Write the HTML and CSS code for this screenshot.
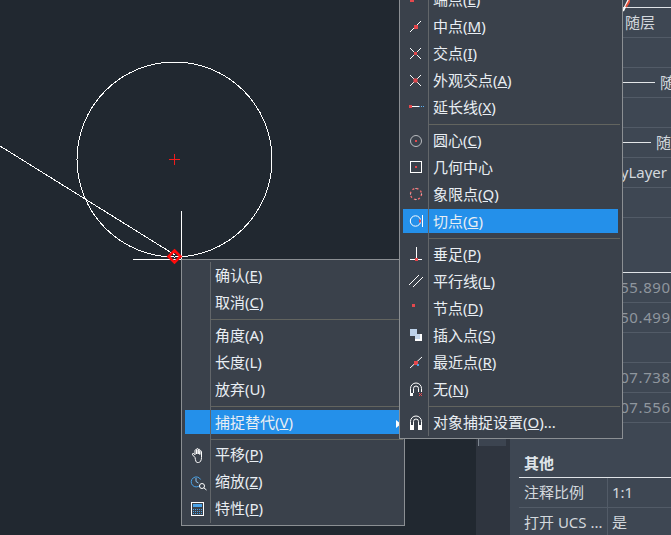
FILE: index.html
```html
<!DOCTYPE html>
<html lang="zh-CN">

<head>
  <meta charset="UTF-8">
  <title>捕捉替代</title>
  <link rel="stylesheet" href="styles.css">
</head>

<body>
  <div class="app">
    <div class="canvas">
      <svg class="drawing" width="476" height="535" viewBox="0 0 476 535">
        <circle cx="174.5" cy="159.5" r="97.5" class="wire" />
        <path d="M0 146 L175 255" class="wire" />
        <path d="M181.5 211 V259 M133 259.5 H182" class="wire" />
        <path d="M169 159.5 H180 M174.5 154 V165" class="mark" />
        <path d="M174.5 250.5 L180.5 256.5 L174.5 262.5 L168.5 256.5 Z" class="snap" />
      </svg>
    </div>

    <div class="track">
      <div class="thumb"></div>
    </div>

    <div class="panel">
      <svg class="swatch" width="8" height="12" viewBox="0 0 8 12">
        <path d="M6.5 0 L1 11" stroke="#fff" stroke-width="2" />
        <path d="M8 0 L4 7" stroke="#e5533d" stroke-width="2" />
      </svg>
      <div class="head head-top"></div>
      <div class="row"><span class="key"></span><span class="val val-color">随层</span></div>
      <div class="row"><span class="key"></span><span class="val"></span></div>
      <div class="row"><span class="key"></span><span class="val"><i class="ln ln-a"></i>随层</span></div>
      <div class="row"><span class="key"></span><span class="val"></span></div>
      <div class="row"><span class="key"></span><span class="val"><i class="ln ln-b"></i>随层</span></div>
      <div class="row"><span class="key"></span><span class="val">ByLayer</span></div>
      <div class="row"><span class="key"></span><span class="val"></span></div>

      <div class="head head-geo"></div>
      <div class="row"><span class="key"></span><span class="val dim">355.8901</span></div>
      <div class="row"><span class="key"></span><span class="val dim">350.4994</span></div>
      <div class="row"><span class="key"></span><span class="val dim"></span></div>
      <div class="row"><span class="key"></span><span class="val dim">107.7385</span></div>
      <div class="row"><span class="key"></span><span class="val dim">107.5562</span></div>

      <div class="head head-other">其他</div>
      <div class="row line"><span class="key">注释比例</span><span class="val">1:1</span></div>
      <div class="row line"><span class="key">打开 UCS ...</span><span class="val">是</span></div>
    </div>

    <!-- right click menu -->
    <div class="menu menu-main">
      <div class="item"><span class="ico"></span><span class="txt">确认(<u>E</u>)</span></div>
      <div class="item"><span class="ico"></span><span class="txt">取消(<u>C</u>)</span></div>
      <div class="sep"></div>
      <div class="item"><span class="ico"></span><span class="txt">角度(A)</span></div>
      <div class="item"><span class="ico"></span><span class="txt">长度(L)</span></div>
      <div class="item"><span class="ico"></span><span class="txt">放弃(U)</span></div>
      <div class="sep"></div>
      <div class="item active has-sub"><span class="ico"></span><span class="txt">捕捉替代(<u>V</u>)</span></div>
      <div class="sep sep-short"></div>
      <div class="item">
        <span class="ico">
          <svg width="21" height="21" viewBox="0 0 21 21" class="thin">
            <path d="M8 12.5 L5.7 10 C4.8 8.8 6 7.8 7 8.8 L8 9.8 V5.5 C8 4.4 9.6 4.4 9.6 5.5 V9 V4.3 C9.6 3.2 11.2 3.2 11.2 4.3 V9 V5 C11.2 3.9 12.8 3.9 12.8 5 V9.5 V6.5 C12.8 5.5 14.5 5.5 14.5 6.5 V12.5 C14.5 15.5 13.2 17.5 11.5 17.5 H10.2 C9 17.5 8.6 15.5 8 12.5 Z" />
          </svg>
        </span>
        <span class="txt">平移(<u>P</u>)</span>
      </div>
      <div class="item">
        <span class="ico">
          <svg width="21" height="21" viewBox="0 0 21 21" class="thin">
            <path d="M13 13.2 A5 5 0 1 1 13.6 7.5" stroke="#4aa3e8" />
            <path d="M9 6 V9.5 L11.5 11" stroke="#8fc4ee" />
            <circle cx="15" cy="14" r="2.5" />
            <path d="M16.8 15.8 L19.5 18" />
          </svg>
        </span>
        <span class="txt">缩放(<u>Z</u>)</span>
      </div>
      <div class="item">
        <span class="ico">
          <svg width="21" height="21" viewBox="0 0 21 21" class="thin">
            <rect x="4.5" y="3.5" width="12" height="13" />
            <rect x="6" y="5" width="9" height="3" fill="#4aa3e8" stroke="none" />
            <path d="M6 10.5 H15 M6 12.5 H15 M6 14.5 H15" stroke="#4aa3e8" stroke-dasharray="1 1" />
          </svg>
        </span>
        <span class="txt">特性(<u>P</u>)</span>
      </div>
    </div>

    <!-- snap override submenu -->
    <div class="menu menu-sub">
      <div class="item">
        <span class="ico">
          <svg width="21" height="21" viewBox="0 0 21 21" class="thin">
            <path d="M7 9 L15 1" />
            <rect x="5" y="8" width="4" height="4" class="red" />
          </svg>
        </span>
        <span class="txt">端点(<u>E</u>)</span>
      </div>
      <div class="item">
        <span class="ico">
          <svg width="21" height="21" viewBox="0 0 21 21" class="thin">
            <path d="M5 15 L16 4" />
            <rect x="9" y="8" width="4" height="4" class="red" />
          </svg>
        </span>
        <span class="txt">中点(<u>M</u>)</span>
      </div>
      <div class="item">
        <span class="ico">
          <svg width="21" height="21" viewBox="0 0 21 21" class="thin">
            <path d="M5 4 L16 15 M16 4 L5 15" />
            <rect x="9" y="8" width="3" height="3" class="red" />
          </svg>
        </span>
        <span class="txt">交点(<u>I</u>)</span>
      </div>
      <div class="item">
        <span class="ico">
          <svg width="21" height="21" viewBox="0 0 21 21" class="thin">
            <path d="M5 4 L16 15 M16 4 L5 15" />
            <rect x="8.5" y="7.5" width="4" height="4" class="red" />
          </svg>
        </span>
        <span class="txt">外观交点(<u>A</u>)</span>
      </div>
      <div class="item">
        <span class="ico">
          <svg width="21" height="21" viewBox="0 0 21 21" class="thin">
            <path d="M7 8.5 H14" />
            <path d="M14 8.5 H20" stroke="#5db1f2" stroke-dasharray="1 1" />
            <rect x="4" y="7" width="3" height="3" class="red" />
          </svg>
        </span>
        <span class="txt">延长线(<u>X</u>)</span>
      </div>
      <div class="sep"></div>
      <div class="item">
        <span class="ico">
          <svg width="21" height="21" viewBox="0 0 21 21" class="thin">
            <circle cx="11" cy="10" r="5.5" stroke="#b9bcc0" />
            <rect x="10" y="9" width="2" height="2" class="red" />
          </svg>
        </span>
        <span class="txt">圆心(<u>C</u>)</span>
      </div>
      <div class="item">
        <span class="ico">
          <svg width="21" height="21" viewBox="0 0 21 21" class="thin">
            <rect x="5.5" y="3.5" width="11" height="11" />
            <rect x="10" y="8" width="2" height="2" class="red" />
          </svg>
        </span>
        <span class="txt">几何中心</span>
      </div>
      <div class="item">
        <span class="ico">
          <svg width="21" height="21" viewBox="0 0 21 21" class="thin">
            <circle cx="11" cy="9" r="5.5" stroke="#f0696c" stroke-width="1.4" stroke-dasharray="2 2.3" />
            <path d="M11 3 V4 M11 14 V15 M5 9 H6 M16 9 H17" stroke="#e6e6e6" />
          </svg>
        </span>
        <span class="txt">象限点(<u>Q</u>)</span>
      </div>
      <div class="item active">
        <span class="ico">
          <svg width="21" height="21" viewBox="0 0 21 21" class="thin">
            <circle cx="10.5" cy="9" r="5.2" />
            <path d="M17.5 3 V15" />
            <rect x="14" y="7.5" width="2" height="3" class="red" />
          </svg>
        </span>
        <span class="txt">切点(<u>G</u>)</span>
      </div>
      <div class="sep"></div>
      <div class="item">
        <span class="ico">
          <svg width="21" height="21" viewBox="0 0 21 21" class="thin">
            <path d="M11.5 2 V14 M5 14.5 H17" />
            <rect x="10" y="13" width="3" height="3" class="red" />
          </svg>
        </span>
        <span class="txt">垂足(<u>P</u>)</span>
      </div>
      <div class="item">
        <span class="ico">
          <svg width="21" height="21" viewBox="0 0 21 21" class="thin">
            <path d="M4 13 L14 3 M8 15 L18 5" />
          </svg>
        </span>
        <span class="txt">平行线(<u>L</u>)</span>
      </div>
      <div class="item">
        <span class="ico">
          <svg width="21" height="21" viewBox="0 0 21 21">
            <rect x="7" y="5" width="3" height="3" class="red" />
          </svg>
        </span>
        <span class="txt">节点(<u>D</u>)</span>
      </div>
      <div class="item">
        <span class="ico">
          <svg width="21" height="21" viewBox="0 0 21 21">
            <rect x="5" y="3" width="7" height="7" fill="#bcd1ea" />
            <rect x="10" y="8" width="7" height="7" fill="#fff" />
            <rect x="10" y="8" width="5" height="5" fill="#c5d7ec" />
          </svg>
        </span>
        <span class="txt">插入点(<u>S</u>)</span>
      </div>
      <div class="item">
        <span class="ico">
          <svg width="21" height="21" viewBox="0 0 21 21" class="thin">
            <path d="M5 15 L17 4" />
            <rect x="9" y="8" width="4" height="4" class="red" />
            <rect x="12" y="11" width="2" height="2" fill="#4aa3e8" stroke="none" />
          </svg>
        </span>
        <span class="txt">最近点(<u>R</u>)</span>
      </div>
      <div class="item">
        <span class="ico">
          <svg width="21" height="21" viewBox="0 0 21 21" class="thin">
            <path d="M5.5 16 V8.5 A5.5 5.5 0 0 1 16.5 8.5 V12 M8.5 13 V8.5 A2.5 2.5 0 0 1 13.5 8.5 V12" />
            <rect x="5" y="13" width="3" height="3" fill="#fff" stroke="none" />
            <path d="M14 13 L17 16 M17 13 L14 16" stroke="#e5484d" />
          </svg>
        </span>
        <span class="txt">无(<u>N</u>)</span>
      </div>
      <div class="sep"></div>
      <div class="item">
        <span class="ico">
          <svg width="21" height="21" viewBox="0 0 21 21" class="thin">
            <path d="M5.5 13 V8.5 A5.5 5.5 0 0 1 16.5 8.5 V13 M8.5 13 V8.5 A2.5 2.5 0 0 1 13.5 8.5 V13" />
            <rect x="5" y="12" width="4" height="5" fill="#fff" stroke="none" />
            <rect x="13" y="12" width="4" height="5" fill="#fff" stroke="none" />
          </svg>
        </span>
        <span class="txt">对象捕捉设置(<u>O</u>)...</span>
      </div>
    </div>
  </div>
</body>
</html>
```

FILE: styles.css
```css
body {
  margin: 0;
  background-color: #212830;
  font-family: "Noto Sans", "Noto Sans CJK SC", sans-serif;
  font-size: 15px;
  color: #e9eef3;
}

.app {
  display: flex;
  position: relative;
  width: 671px;
  height: 535px;
  overflow: hidden;
}

/* drawing area */
.canvas {
  width: 476px;
  flex-shrink: 0;
  background-color: #212830;
}

.drawing {
  display: block;
}

.wire {
  fill: none;
  stroke: #fff;
  stroke-width: 1;
  shape-rendering: crispEdges;
}

.mark {
  fill: none;
  stroke: #f01c1c;
  stroke-width: 1;
  shape-rendering: crispEdges;
}

.snap {
  fill: none;
  stroke: #ff0c0c;
  stroke-width: 2.6;
}

/* scrollbar beside the properties */
.track {
  width: 34px;
  flex-shrink: 0;
  background-color: #2f353f;
}

.thumb {
  width: 28px;
  height: 446px;
  margin-left: 2px;
  background-color: #3c4450;
  border-left: 1px solid #7d8690;
  box-sizing: border-box;
}

/* properties */
.panel {
  flex: 1;
  position: relative;
  padding-left: 9px;
  padding-top: 7px;
  background-color: #3e4753;
  overflow: hidden;
}

.swatch {
  position: absolute;
  left: 112px;
  top: 0;
}

.head {
  box-sizing: border-box;
  border-bottom: 1px solid #dfe3e7;
  padding-left: 5px;
  white-space: nowrap;
}

.head-top {
  height: 1px;
}

.head-geo {
  height: 55px;
}

.head-other {
  height: 55px;
  padding-top: 29px;
  line-height: 22px;
  font-weight: 700;
  color: #dfe4e9;
}

.row {
  display: flex;
  box-sizing: border-box;
  height: 30px;
  border-bottom: 1px solid #525b67;
  line-height: 29px;
  white-space: nowrap;
}

.key {
  width: 83px;
  padding-left: 5px;
  flex-shrink: 0;
  color: #d3d8dd;
}

.line .key {
  border-right: 1px solid #525b67;
}

.val {
  padding-left: 4px;
  color: #d3d8dd;
  display: flex;
  align-items: center;
}

.val-color {
  padding-left: 18px;
}

.dim {
  color: #8f969e;
  letter-spacing: 0.6px;
}

.ln {
  display: inline-block;
  flex-shrink: 0;
  height: 1px;
  margin-right: 5px;
  background-color: #e3e6e9;
}

.ln-a {
  width: 44px;
}

.ln-b {
  width: 40px;
}

/* context menus */
.menu {
  position: absolute;
  box-sizing: border-box;
  width: 224px;
  padding: 3px 3px 2px;
  background-color: #3a414b;
  border: 1px solid #8b8f93;
}

.menu::before {
  content: "";
  position: absolute;
  left: 28px;
  top: 2px;
  bottom: 2px;
  width: 1px;
  background-color: #62666a;
  z-index: 1;
}

.menu-main {
  left: 181px;
  top: 259px;
}

.menu-sub {
  left: 399px;
  top: -17px;
  padding-right: 4px;
  padding-bottom: 1px;
}

.item {
  display: flex;
  align-items: center;
  height: 27px;
}

.item.active {
  background: linear-gradient(#2490ea, #2490ea) no-repeat 0 0 / 100% 24px;
}

.has-sub::after {
  content: "";
  margin-left: auto;
  border-left: 5px solid #fff;
  border-top: 4px solid transparent;
  border-bottom: 4px solid transparent;
}

.ico {
  display: flex;
  align-items: center;
  justify-content: center;
  width: 25px;
  height: 21px;
  flex-shrink: 0;
}

.ico svg {
  display: block;
}

.txt {
  padding-left: 5px;
  padding-bottom: 3px;
  line-height: 24px;
  white-space: nowrap;
}

.thin {
  fill: none;
  stroke: #fff;
  stroke-width: 1;
}

.red {
  fill: #e5484d;
  stroke: none;
}

.sep {
  height: 1px;
  margin: 2px -2px 3px 26px;
  background-color: #62645f;
}

.sep-short {
  margin-bottom: 2px;
}
```
